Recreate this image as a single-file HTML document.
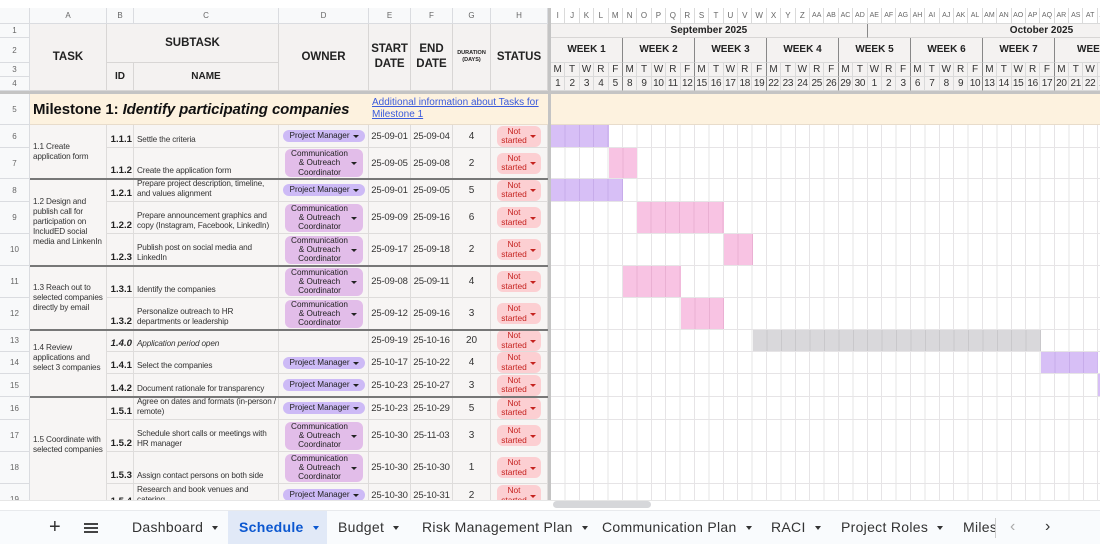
<!DOCTYPE html>
<html><head><meta charset="utf-8">
<style>
*{box-sizing:border-box;margin:0;padding:0}
body{width:1100px;height:544px;overflow:hidden;background:#fff;font-family:"Liberation Sans",Arial,sans-serif;color:#222;position:relative}
.a{position:absolute}
#grid{position:absolute;left:0;top:0;width:1100px;height:500px;overflow:hidden}
.hd{background:#f8f9fa;color:#666;font-size:8px;text-align:center;line-height:16px;border-right:1px solid #dadce0;border-bottom:1px solid #dadce0}
.rn{background:#f8f9fa;color:#666;font-size:8px;text-align:center;border-right:1px solid #dadce0;border-bottom:1px solid #dadce0;display:flex;align-items:center;justify-content:center}
.th{background:#f4f2f1;border-right:1px solid #d8d6d5;border-bottom:1px solid #d8d6d5;font-weight:bold;display:flex;align-items:center;justify-content:center;text-align:center;font-size:11.5px;line-height:15px}
.row{position:absolute;left:30px;width:518px}
.c{position:absolute;top:0;height:100%;background:#f7f5f4;border-right:1px solid #dedcdb;border-bottom:1px solid #dedcdb}
.id{left:77px;width:27px;font-weight:bold;font-size:9.6px;display:flex;align-items:flex-end;justify-content:flex-end;padding:0 1px 2px 0}
.nm{left:104px;width:145px;font-size:8.2px;letter-spacing:-.15px;line-height:10px;color:#333;display:flex;align-items:flex-end;padding:0 2px 2px 3px}
.ow{left:249px;width:90px;display:flex;align-items:center;justify-content:center}
.dt{width:42px;font-size:9.5px;letter-spacing:-.2px;display:flex;align-items:center;justify-content:center;color:#333}
.e{left:339px}.f{left:381px}
.du{left:423px;width:38px;font-size:10px;display:flex;align-items:center;justify-content:center;color:#333}
.st{left:461px;width:57px;display:flex;align-items:center;justify-content:center}
.pm{background:#cdbaf6;border-radius:7px;height:12px;width:82px;font-size:8.2px;line-height:12px;padding-left:7px;position:relative;color:#222;white-space:nowrap}
.co{background:#e2bde9;border-radius:6px;height:28px;width:78px;font-size:8.2px;line-height:9.3px;text-align:center;padding:0 8px 0 0;position:relative;color:#222;white-space:nowrap}
.pm:after,.co:after{content:"";position:absolute;right:6px;top:50%;margin-top:-1px;border-left:3px solid transparent;border-right:3px solid transparent;border-top:3px solid #222}
.ns{background:#fccfd2;border-radius:6px;width:44px;height:21px;font-size:8.4px;line-height:9.5px;color:#c5221f;text-align:center;padding:1px 10px 0 0;position:relative}
.ns:after{content:"";position:absolute;right:5px;top:50%;margin-top:-1px;border-left:3px solid transparent;border-right:3px solid transparent;border-top:3px solid #c5221f}
.tk{position:absolute;left:30px;width:77px;background:#f7f5f4;border-right:1px solid #dedcdb;font-size:8.2px;letter-spacing:-.15px;line-height:10px;color:#333;padding:0 2px 0 3px;display:flex;align-items:center}
.sep{position:absolute;left:30px;width:518px;height:2px;background:#777}
#g{position:absolute;left:551px;top:8px;width:549px;height:492px;overflow:hidden}
.fl{display:flex;position:absolute;left:0}
.fl span{flex:0 0 14.4px;width:14.4px;text-align:center;border-right:1px solid #dadada;border-bottom:1px solid #dadada}
.gr{position:absolute;left:0;width:600px;background:#fff repeating-linear-gradient(90deg,transparent 0 13.4px,#e6e4e6 13.4px 14.4px);border-bottom:1px solid #e6e4e6}
.bar{position:absolute;top:0;height:100%}
.pu{background:#d7bff6;background-image:repeating-linear-gradient(90deg,transparent 0 13.4px,#c7acea 13.4px 14.4px)}
.pk{background:#f8c3e3;background-image:repeating-linear-gradient(90deg,transparent 0 13.4px,#eab0d3 13.4px 14.4px)}
.gy{background:#d9d8db;background-image:repeating-linear-gradient(90deg,transparent 0 13.4px,#c9c8cb 13.4px 14.4px)}
.tab{position:absolute;top:510px;height:34px;line-height:34px;font-size:14px;color:#333;letter-spacing:.3px}
.tab i{display:inline-block;margin-left:9px;vertical-align:middle;border-left:3.5px solid transparent;border-right:3.5px solid transparent;border-top:4px solid #333}
</style></head><body>
<div id="grid">
<div class="a hd" style="left:0;top:8px;width:30px;height:16px"></div>
<div class="a hd" style="left:30px;top:8px;width:77px;height:16px">A</div>
<div class="a hd" style="left:107px;top:8px;width:27px;height:16px">B</div>
<div class="a hd" style="left:134px;top:8px;width:145px;height:16px">C</div>
<div class="a hd" style="left:279px;top:8px;width:90px;height:16px">D</div>
<div class="a hd" style="left:369px;top:8px;width:42px;height:16px">E</div>
<div class="a hd" style="left:411px;top:8px;width:42px;height:16px">F</div>
<div class="a hd" style="left:453px;top:8px;width:38px;height:16px">G</div>
<div class="a hd" style="left:491px;top:8px;width:57px;height:16px">H</div>
<div class="a rn" style="left:0;top:24px;width:30px;height:14px">1</div>
<div class="a rn" style="left:0;top:38px;width:30px;height:25px">2</div>
<div class="a rn" style="left:0;top:63px;width:30px;height:14px">3</div>
<div class="a rn" style="left:0;top:77px;width:30px;height:14px">4</div>
<div class="a rn" style="left:0;top:94px;width:30px;height:31px">5</div>
<div class="a rn" style="left:0;top:125px;width:30px;height:23px">6</div>
<div class="a rn" style="left:0;top:148px;width:30px;height:31px">7</div>
<div class="a rn" style="left:0;top:179px;width:30px;height:23px">8</div>
<div class="a rn" style="left:0;top:202px;width:30px;height:32px">9</div>
<div class="a rn" style="left:0;top:234px;width:30px;height:32px">10</div>
<div class="a rn" style="left:0;top:266px;width:30px;height:32px">11</div>
<div class="a rn" style="left:0;top:298px;width:30px;height:32px">12</div>
<div class="a rn" style="left:0;top:330px;width:30px;height:22px">13</div>
<div class="a rn" style="left:0;top:352px;width:30px;height:22px">14</div>
<div class="a rn" style="left:0;top:374px;width:30px;height:23px">15</div>
<div class="a rn" style="left:0;top:397px;width:30px;height:23px">16</div>
<div class="a rn" style="left:0;top:420px;width:30px;height:32px">17</div>
<div class="a rn" style="left:0;top:452px;width:30px;height:32px">18</div>
<div class="a rn" style="left:0;top:484px;width:30px;height:32px">19</div>
<div class="a th" style="left:30px;top:24px;width:77px;height:67px">TASK</div>
<div class="a th" style="left:107px;top:24px;width:172px;height:39px">SUBTASK</div>
<div class="a th" style="left:107px;top:63px;width:27px;height:28px;font-size:10px">ID</div>
<div class="a th" style="left:134px;top:63px;width:145px;height:28px;font-size:10px">NAME</div>
<div class="a th" style="left:279px;top:24px;width:90px;height:67px">OWNER</div>
<div class="a th" style="left:369px;top:24px;width:42px;height:67px;letter-spacing:-.2px">START<br>DATE</div>
<div class="a th" style="left:411px;top:24px;width:42px;height:67px">END<br>DATE</div>
<div class="a th" style="left:453px;top:24px;width:38px;height:67px;font-size:5.5px;line-height:7px">DURATION<br>(DAYS)</div>
<div class="a th" style="left:491px;top:24px;width:57px;height:67px">STATUS</div>
<div class="a" style="left:0;top:91px;width:548px;height:3px;background:#c4c4c4"></div>
<div class="a" style="left:30px;top:94px;width:339px;height:31px;background:#fdf2df;border-bottom:1px solid #e8dccb;font-size:15px;font-weight:bold;line-height:31px;padding-left:3px;color:#111;white-space:nowrap;letter-spacing:-.1px">Milestone 1: <i>Identify participating companies</i></div>
<div class="a" style="left:369px;top:94px;width:179px;height:31px;background:#fdf2df;border-bottom:1px solid #e8dccb;font-size:10px;line-height:12px;padding:3px 0 0 3px;color:#3b5bdb;text-decoration:underline">Additional information about Tasks for Milestone 1</div>

<div class="row" style="top:125px;height:23px"><div class="c id">1.1.1</div><div class="c nm">Settle the criteria</div><div class="c ow"><div class="pm">Project Manager</div></div><div class="c dt e">25-09-01</div><div class="c dt f">25-09-04</div><div class="c du">4</div><div class="c st"><div class="ns">Not started</div></div></div>
<div class="row" style="top:148px;height:31px"><div class="c id">1.1.2</div><div class="c nm">Create the application form</div><div class="c ow"><div class="co">Communication<br>&amp; Outreach<br>Coordinator</div></div><div class="c dt e">25-09-05</div><div class="c dt f">25-09-08</div><div class="c du">2</div><div class="c st"><div class="ns">Not started</div></div></div>
<div class="row" style="top:179px;height:23px"><div class="c id">1.2.1</div><div class="c nm">Prepare project description, timeline, and values alignment</div><div class="c ow"><div class="pm">Project Manager</div></div><div class="c dt e">25-09-01</div><div class="c dt f">25-09-05</div><div class="c du">5</div><div class="c st"><div class="ns">Not started</div></div></div>
<div class="row" style="top:202px;height:32px"><div class="c id">1.2.2</div><div class="c nm">Prepare announcement graphics and copy (Instagram, Facebook, LinkedIn)</div><div class="c ow"><div class="co">Communication<br>&amp; Outreach<br>Coordinator</div></div><div class="c dt e">25-09-09</div><div class="c dt f">25-09-16</div><div class="c du">6</div><div class="c st"><div class="ns">Not started</div></div></div>
<div class="row" style="top:234px;height:32px"><div class="c id">1.2.3</div><div class="c nm">Publish post on social media and LinkedIn</div><div class="c ow"><div class="co">Communication<br>&amp; Outreach<br>Coordinator</div></div><div class="c dt e">25-09-17</div><div class="c dt f">25-09-18</div><div class="c du">2</div><div class="c st"><div class="ns">Not started</div></div></div>
<div class="row" style="top:266px;height:32px"><div class="c id">1.3.1</div><div class="c nm">Identify the companies</div><div class="c ow"><div class="co">Communication<br>&amp; Outreach<br>Coordinator</div></div><div class="c dt e">25-09-08</div><div class="c dt f">25-09-11</div><div class="c du">4</div><div class="c st"><div class="ns">Not started</div></div></div>
<div class="row" style="top:298px;height:32px"><div class="c id">1.3.2</div><div class="c nm">Personalize outreach to HR departments or leadership</div><div class="c ow"><div class="co">Communication<br>&amp; Outreach<br>Coordinator</div></div><div class="c dt e">25-09-12</div><div class="c dt f">25-09-16</div><div class="c du">3</div><div class="c st"><div class="ns">Not started</div></div></div>
<div class="row" style="top:330px;height:22px"><div class="c id"><i>1.4.0</i></div><div class="c nm"><i>Application period open</i></div><div class="c ow"></div><div class="c dt e">25-09-19</div><div class="c dt f">25-10-16</div><div class="c du">20</div><div class="c st"><div class="ns">Not started</div></div></div>
<div class="row" style="top:352px;height:22px"><div class="c id">1.4.1</div><div class="c nm">Select the companies</div><div class="c ow"><div class="pm">Project Manager</div></div><div class="c dt e">25-10-17</div><div class="c dt f">25-10-22</div><div class="c du">4</div><div class="c st"><div class="ns">Not started</div></div></div>
<div class="row" style="top:374px;height:23px"><div class="c id">1.4.2</div><div class="c nm">Document rationale for transparency</div><div class="c ow"><div class="pm">Project Manager</div></div><div class="c dt e">25-10-23</div><div class="c dt f">25-10-27</div><div class="c du">3</div><div class="c st"><div class="ns">Not started</div></div></div>
<div class="row" style="top:397px;height:23px"><div class="c id">1.5.1</div><div class="c nm">Agree on dates and formats (in-person / remote)</div><div class="c ow"><div class="pm">Project Manager</div></div><div class="c dt e">25-10-23</div><div class="c dt f">25-10-29</div><div class="c du">5</div><div class="c st"><div class="ns">Not started</div></div></div>
<div class="row" style="top:420px;height:32px"><div class="c id">1.5.2</div><div class="c nm">Schedule short calls or meetings with HR manager</div><div class="c ow"><div class="co">Communication<br>&amp; Outreach<br>Coordinator</div></div><div class="c dt e">25-10-30</div><div class="c dt f">25-11-03</div><div class="c du">3</div><div class="c st"><div class="ns">Not started</div></div></div>
<div class="row" style="top:452px;height:32px"><div class="c id">1.5.3</div><div class="c nm">Assign contact persons on both side</div><div class="c ow"><div class="co">Communication<br>&amp; Outreach<br>Coordinator</div></div><div class="c dt e">25-10-30</div><div class="c dt f">25-10-30</div><div class="c du">1</div><div class="c st"><div class="ns">Not started</div></div></div>
<div class="row" style="top:484px;height:32px"><div class="c id" style="align-items:flex-start;padding-top:12px">1.5.4</div><div class="c nm" style="align-items:flex-start;padding-top:1px">Research and book venues and catering</div><div class="c ow" style="align-items:flex-start;padding-top:5px"><div class="pm">Project Manager</div></div><div class="c dt e" style="align-items:flex-start;padding-top:6px">25-10-30</div><div class="c dt f" style="align-items:flex-start;padding-top:6px">25-10-31</div><div class="c du" style="align-items:flex-start;padding-top:6px">2</div><div class="c st" style="align-items:flex-start;padding-top:1px"><div class="ns">Not started</div></div></div>

<div class="tk" style="top:125px;height:54px;border-bottom:1px solid #dedcdb">1.1 Create application form</div>
<div class="tk" style="top:179px;height:87px;border-bottom:1px solid #dedcdb">1.2 Design and publish call for participation on IncludED social media and LinkenIn</div>
<div class="tk" style="top:266px;height:64px">1.3 Reach out to selected companies directly by email</div>
<div class="tk" style="top:330px;height:67px;align-items:flex-start;padding-top:13px">1.4 Review applications and select 3 companies</div>
<div class="tk" style="top:397px;height:110px;align-items:flex-start;padding-top:38px">1.5 Coordinate with selected companies</div>
<div class="sep" style="top:178px"></div>
<div class="sep" style="top:265px"></div>
<div class="sep" style="top:329px"></div>
<div class="sep" style="top:396px"></div>

<div class="a" style="left:548px;top:8px;width:3px;height:492px;background:#c4c4c4"></div>

<div id="g">
<div class="fl" style="top:0;height:16px;font-size:8px;color:#666;line-height:15px;background:#fff"><span>I</span><span>J</span><span>K</span><span>L</span><span>M</span><span>N</span><span>O</span><span>P</span><span>Q</span><span>R</span><span>S</span><span>T</span><span>U</span><span>V</span><span>W</span><span>X</span><span>Y</span><span>Z</span><span style="font-size:7px">AA</span><span style="font-size:7px">AB</span><span style="font-size:7px">AC</span><span style="font-size:7px">AD</span><span style="font-size:7px">AE</span><span style="font-size:7px">AF</span><span style="font-size:7px">AG</span><span style="font-size:7px">AH</span><span style="font-size:7px">AI</span><span style="font-size:7px">AJ</span><span style="font-size:7px">AK</span><span style="font-size:7px">AL</span><span style="font-size:7px">AM</span><span style="font-size:7px">AN</span><span style="font-size:7px">AO</span><span style="font-size:7px">AP</span><span style="font-size:7px">AQ</span><span style="font-size:7px">AR</span><span style="font-size:7px">AS</span><span style="font-size:7px">AT</span><span style="font-size:7px">AU</span></div>
<div class="a" style="left:0;top:16px;width:316.8px;height:14px;background:#f4f2f1;border-right:1px solid #888;border-bottom:1px solid #d8d6d5;font-size:10px;font-weight:bold;text-align:center;line-height:14px">September 2025</div>
<div class="a" style="left:316.8px;top:16px;width:300px;height:14px;background:#f4f2f1;border-bottom:1px solid #d8d6d5;font-size:10px;font-weight:bold;line-height:14px;padding-left:142px">October 2025</div>
<div class="fl" style="top:30px;height:25px;font-size:10px;font-weight:bold;line-height:24px;background:#f4f2f1">
<span style="flex-basis:72px;width:72px;border-right-color:#888">WEEK 1</span><span style="flex-basis:72px;width:72px;border-right-color:#888">WEEK 2</span><span style="flex-basis:72px;width:72px;border-right-color:#888">WEEK 3</span><span style="flex-basis:72px;width:72px;border-right-color:#888">WEEK 4</span><span style="flex-basis:72px;width:72px;border-right-color:#888">WEEK 5</span><span style="flex-basis:72px;width:72px;border-right-color:#888">WEEK 6</span><span style="flex-basis:72px;width:72px;border-right-color:#888">WEEK 7</span><span style="flex-basis:72px;width:72px;text-align:left;padding-left:22px">WEEK 8</span></div>
<div class="fl" style="top:55px;height:14px;font-size:10px;line-height:13px;background:#f4f2f1;color:#333"><span>M</span><span>T</span><span>W</span><span>R</span><span style="border-right-color:#888">F</span><span>M</span><span>T</span><span>W</span><span>R</span><span style="border-right-color:#888">F</span><span>M</span><span>T</span><span>W</span><span>R</span><span style="border-right-color:#888">F</span><span>M</span><span>T</span><span>W</span><span>R</span><span style="border-right-color:#888">F</span><span>M</span><span>T</span><span>W</span><span>R</span><span style="border-right-color:#888">F</span><span>M</span><span>T</span><span>W</span><span>R</span><span style="border-right-color:#888">F</span><span>M</span><span>T</span><span>W</span><span>R</span><span style="border-right-color:#888">F</span><span>M</span><span>T</span><span>W</span><span>R</span></div>
<div class="fl" style="top:69px;height:14px;font-size:10px;line-height:13px;background:#f4f2f1;color:#333;letter-spacing:-.3px"><span>1</span><span>2</span><span>3</span><span>4</span><span style="border-right-color:#888">5</span><span>8</span><span>9</span><span>10</span><span>11</span><span style="border-right-color:#888">12</span><span>15</span><span>16</span><span>17</span><span>18</span><span style="border-right-color:#888">19</span><span>22</span><span>23</span><span>24</span><span>25</span><span style="border-right-color:#888">26</span><span>29</span><span>30</span><span>1</span><span>2</span><span style="border-right-color:#888">3</span><span>6</span><span>7</span><span>8</span><span>9</span><span style="border-right-color:#888">10</span><span>13</span><span>14</span><span>15</span><span>16</span><span style="border-right-color:#888">17</span><span>20</span><span>21</span><span>22</span><span>23</span></div>
<div class="a" style="left:0;top:83px;width:600px;height:3px;background:#c4c4c4"></div>
<div class="a" style="left:0;top:86px;width:600px;height:31px;background:#fdf2df;border-bottom:1px solid #e8dccb"></div>
<div class="gr" style="top:117px;height:23px"><div class="bar pu" style="left:0;width:57.6px"></div></div>
<div class="gr" style="top:140px;height:31px"><div class="bar pk" style="left:57.6px;width:28.8px"></div></div>
<div class="gr" style="top:171px;height:23px"><div class="bar pu" style="left:0;width:72px"></div></div>
<div class="gr" style="top:194px;height:32px"><div class="bar pk" style="left:86.4px;width:86.4px"></div></div>
<div class="gr" style="top:226px;height:32px"><div class="bar pk" style="left:172.8px;width:28.8px"></div></div>
<div class="gr" style="top:258px;height:32px"><div class="bar pk" style="left:72px;width:57.6px"></div></div>
<div class="gr" style="top:290px;height:32px"><div class="bar pk" style="left:129.6px;width:43.2px"></div></div>
<div class="gr" style="top:322px;height:22px"><div class="bar gy" style="left:201.6px;width:288px"></div></div>
<div class="gr" style="top:344px;height:22px"><div class="bar pu" style="left:489.6px;width:57.6px"></div></div>
<div class="gr" style="top:366px;height:23px"><div class="bar pu" style="left:547.2px;width:43.2px"></div></div>
<div class="gr" style="top:389px;height:23px"></div>
<div class="gr" style="top:412px;height:32px"></div>
<div class="gr" style="top:444px;height:32px"></div>
<div class="gr" style="top:476px;height:32px"></div>
</div>
</div>
<div class="a" style="left:0;top:500px;width:1100px;height:10px;background:#fff;border-top:1px solid #e6e6e6"></div>
<div class="a" style="left:553px;top:501px;width:98px;height:7px;border-radius:4px;background:#d6d7da"></div>
<div class="a" style="left:0;top:510px;width:1100px;height:34px;background:#f9fbfd;border-top:1px solid #e8eaed"></div>
<div class="a" style="left:228px;top:511px;width:99px;height:33px;background:#e1e9f7"></div>
<div class="tab" style="left:49px;font-size:20px;font-weight:300">+</div>
<div class="a" style="left:84px;top:523px;width:14px;height:1.5px;background:#444;box-shadow:0 4px 0 #444,0 8px 0 #444"></div>
<div class="tab" style="left:132px">Dashboard<i></i></div>
<div class="tab" style="left:239px;color:#0b57d0;font-weight:bold">Schedule<i style="border-top-color:#0b57d0"></i></div>
<div class="tab" style="left:338px">Budget<i></i></div>
<div class="tab" style="left:422px">Risk Management Plan<i></i></div>
<div class="tab" style="left:602px">Communication Plan<i></i></div>
<div class="tab" style="left:771px">RACI<i></i></div>
<div class="tab" style="left:841px">Project Roles<i></i></div>
<div class="tab" style="left:963px;width:32px;overflow:hidden">Milestones</div>
<div class="a" style="left:995px;top:518px;width:1px;height:20px;background:#ccc"></div>
<div class="tab" style="left:1010px;color:#aaa;font-size:16px">&#8249;</div>
<div class="tab" style="left:1045px;color:#333;font-size:16px">&#8250;</div>
</body></html>
